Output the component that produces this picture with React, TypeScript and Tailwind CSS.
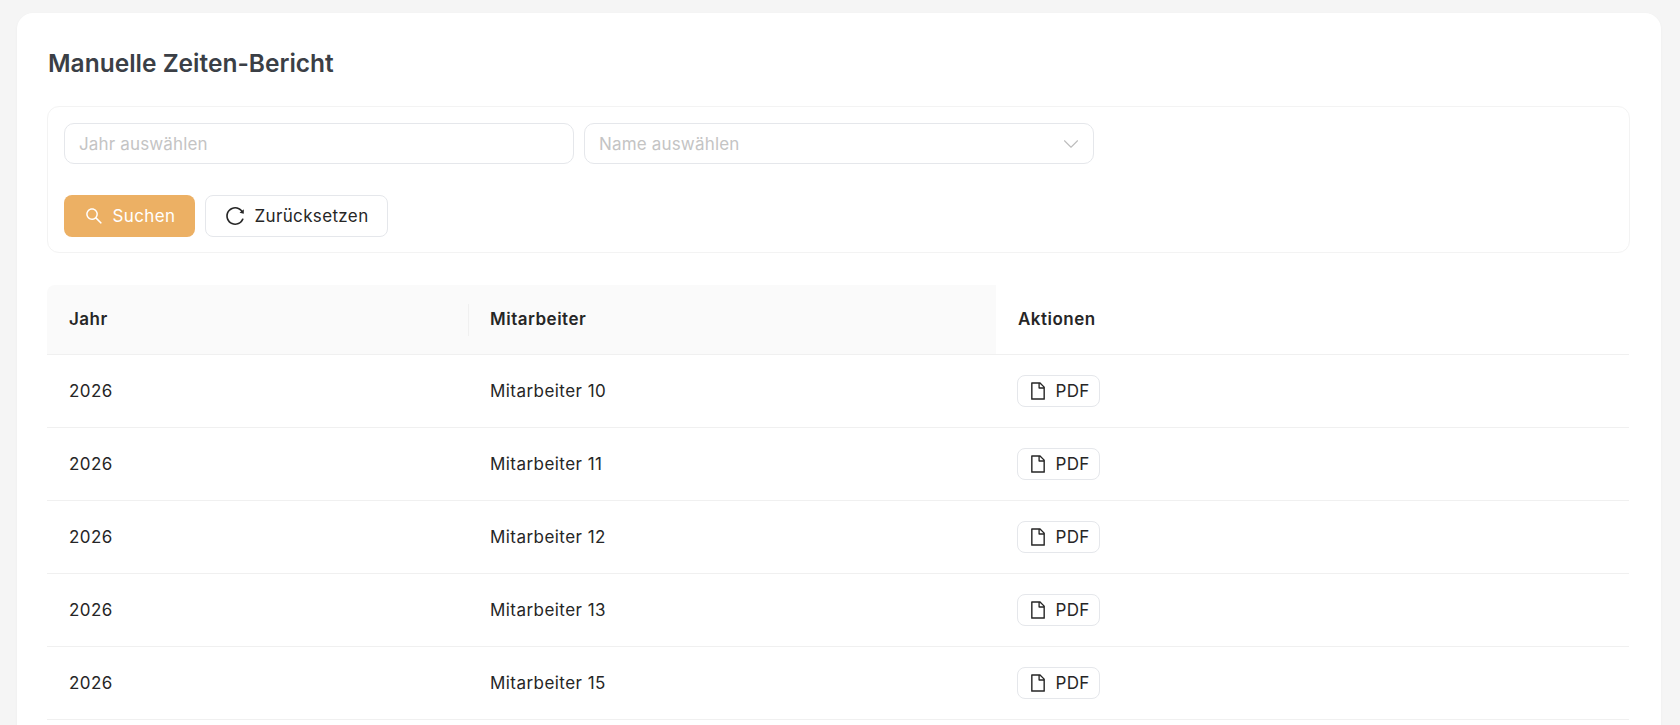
import { ChevronDown } from 'lucide-react'
import { AiOutlineFile, AiOutlineReload, AiOutlineSearch } from 'react-icons/ai'

const rows = ['Mitarbeiter 10', 'Mitarbeiter 11', 'Mitarbeiter 12', 'Mitarbeiter 13', 'Mitarbeiter 15']

export default function App() {
  return (
    <div className="h-[725px] overflow-hidden bg-[#f5f5f5] pl-[17px] pr-[19px] pt-[13px] font-['Inter',sans-serif] text-[#262626]">
      <div className="min-h-[800px] rounded-t-[16px] bg-white pl-[30px] pr-[31px] pt-[34px] shadow-[0_1px_3px_rgba(0,0,0,0.04)]">
        <h1 className="mb-[27px] ml-px text-[24.5px] leading-[32px] font-semibold text-[#3b3f46]">Manuelle Zeiten-Bericht</h1>

        {/* Filters */}
        <div className="h-[147px] rounded-[12px] border border-[#f3f3f3] pl-4 pt-4">
          <div className="flex gap-[10px]">
            <div className="flex h-[41px] w-[510px] items-center rounded-[10px] border border-[#e5e7eb] px-[14px] pt-[2px] text-[17px] tracking-[0.15px] text-[#c4c4c4]">
              Jahr auswählen
            </div>
            <div className="flex h-[41px] w-[510px] items-center justify-between rounded-[10px] border border-[#e5e7eb] pl-[14px] pr-[9px] text-[17px] tracking-[0.17px] text-[#c4c4c4]">
              <span className="pt-[2px]">Name auswählen</span>
              <ChevronDown className="h-[26px] w-[26px] text-[#bdbdbd]" strokeWidth={1} />
            </div>
          </div>
          <div className="mt-[31px] flex gap-[10px]">
            <button className="flex h-[42px] w-[131px] items-center justify-center gap-[9px] rounded-[8px] bg-[#ecb064] text-[17px] tracking-[0.36px] text-white">
              <AiOutlineSearch className="h-5 w-5" />
              <span className="pt-px">Suchen</span>
            </button>
            <button className="flex h-[42px] w-[183px] items-center justify-center gap-[8px] rounded-[8px] border border-[#e5e7eb] bg-white text-[17px] tracking-[0.36px]">
              <AiOutlineReload className="h-[22px] w-[22px]" />
              <span className="pt-px">Zurücksetzen</span>
            </button>
          </div>
        </div>

        {/* Table */}
        <div className="mr-px mt-[32px]">
          <div className="grid h-[70px] grid-cols-[422px_527px_1fr] items-center border-b border-[#f0f0f0] text-[17px] font-semibold tracking-[0.5px]">
            <div className="relative flex h-full items-center rounded-tl-[8px] bg-[#fafafa] pl-[22px]">
              Jahr
              <span className="absolute right-0 top-1/2 h-[32px] w-px -translate-y-1/2 bg-[#f0f0f0]" />
            </div>
            <div className="flex h-full items-center bg-[#fafafa] pl-[21px]">Mitarbeiter</div>
            <div className="pl-[22px]">Aktionen</div>
          </div>
          {rows.map(name => (
            <div
              key={name}
              className="grid h-[73px] grid-cols-[422px_527px_1fr] items-center border-b border-[#f0f0f0] text-[17px] tracking-[0.45px]"
            >
              <div className="pl-[22px] pt-[2px]">2026</div>
              <div className="pl-[21px] pt-[2px]">{name}</div>
              <div className="pl-[21px]">
                <button className="flex h-[32px] w-[83px] items-center justify-center gap-[8px] rounded-[8px] border border-[#e5e7eb] bg-white text-[17px] tracking-[0.2px]">
                  <AiOutlineFile className="h-[20px] w-[20px]" />
                  <span className="pt-px">PDF</span>
                </button>
              </div>
            </div>
          ))}
        </div>
      </div>
    </div>
  )
}
